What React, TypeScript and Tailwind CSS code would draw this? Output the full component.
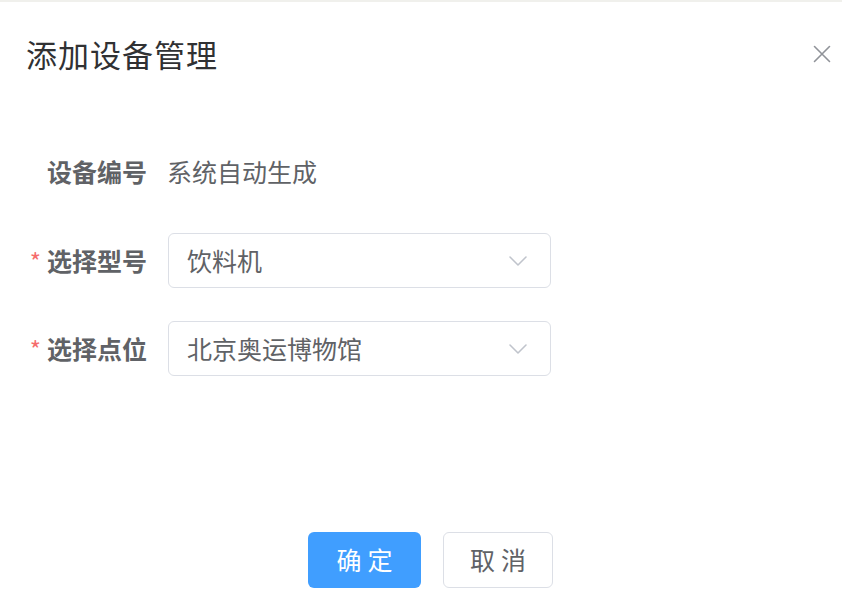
import React from "react";

const font = { fontFamily: '"Noto Sans CJK SC", "Noto Sans", sans-serif' };

function Chevron() {
  return (
    <svg width="20" height="12" viewBox="0 0 20 12" fill="none">
      <path d="M2 2 L10 10 L18 2" stroke="#c0c4cc" strokeWidth="1.6" strokeLinecap="round" strokeLinejoin="round" />
    </svg>
  );
}

function Select({ value }: { value: string }) {
  return (
    <div className="w-[383px] h-[55px] border border-[#dcdfe6] rounded-[6px] flex items-center justify-between pl-[18px] pr-[22px] bg-white">
      <span className="text-[25px] text-[#606266] leading-none">{value}</span>
      <Chevron />
    </div>
  );
}

export default function App() {
  return (
    <div className="w-[842px] h-[609px] bg-white relative overflow-hidden" style={font}>
      <div className="h-[2px] bg-[#f0f0ec]" />
      <div className="flex items-center justify-between pl-[26px] pr-[10px] pt-[31px] h-[73px]">
        <div className="text-[31px] leading-[40px] text-[#303133] tracking-[1px]">添加设备管理</div>
        <svg width="18" height="18" viewBox="0 0 18 18" className="mr-[1px]">
          <path d="M1.5 1.5 L16.5 16.5 M16.5 1.5 L1.5 16.5" stroke="#909399" strokeWidth="1.6" strokeLinecap="round" />
        </svg>
      </div>
      <div className="flex flex-col mt-[69px]">
        <div className="flex items-center h-[55px]">
          <div className="w-[147px] text-right text-[25px] font-bold text-[#606266] leading-none">设备编号</div>
          <div className="ml-[20px] text-[25px] text-[#606266] leading-none">系统自动生成</div>
        </div>
        <div className="flex items-center h-[55px] mt-[34px]">
          <div className="w-[147px] text-right text-[25px] font-bold text-[#606266] leading-none">
            <span className="text-[#f56c6c] text-[24px] mr-[6px] font-normal">*</span>选择型号
          </div>
          <div className="ml-[21px]">
            <Select value="饮料机" />
          </div>
        </div>
        <div className="flex items-center h-[55px] mt-[33px]">
          <div className="w-[147px] text-right text-[25px] font-bold text-[#606266] leading-none">
            <span className="text-[#f56c6c] text-[24px] mr-[6px] font-normal">*</span>选择点位
          </div>
          <div className="ml-[21px]">
            <Select value="北京奥运博物馆" />
          </div>
        </div>
      </div>
      <div className="flex gap-[22px] pl-[308px] mt-[156px]">
        <button className="w-[113px] h-[56px] rounded-[6px] bg-[#409eff] text-white text-[25px] tracking-[6px] pl-[6px] flex items-center justify-center">
          确定
        </button>
        <button className="w-[110px] h-[56px] rounded-[6px] bg-white border border-[#dcdfe6] text-[#606266] text-[25px] tracking-[6px] pl-[6px] flex items-center justify-center">
          取消
        </button>
      </div>
    </div>
  );
}
